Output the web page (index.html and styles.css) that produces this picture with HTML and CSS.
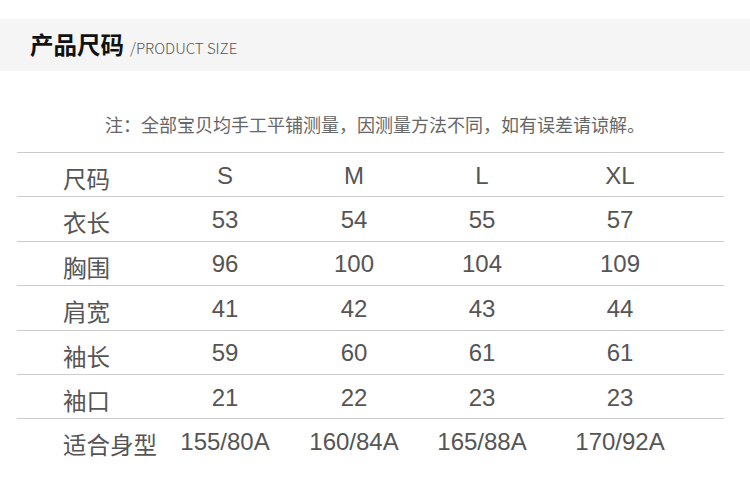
FILE: index.html
```html
<!DOCTYPE html>
<html lang="zh-CN">
<head>
<meta charset="utf-8">
<title>产品尺码</title>
<link rel="stylesheet" href="styles.css">
</head>
<body>
<div class="header">
  <h1 class="title">产品尺码</h1>
  <span class="subtitle">/PRODUCT SIZE</span>
</div>
<p class="note">注：全部宝贝均手工平铺测量，因测量方法不同，如有误差请谅解。</p>
<div class="table">
  <div class="row"><span class="label">尺码</span><span class="cell">S</span><span class="cell">M</span><span class="cell">L</span><span class="cell">XL</span></div>
  <div class="row"><span class="label">衣长</span><span class="cell">53</span><span class="cell">54</span><span class="cell">55</span><span class="cell">57</span></div>
  <div class="row"><span class="label">胸围</span><span class="cell">96</span><span class="cell">100</span><span class="cell">104</span><span class="cell">109</span></div>
  <div class="row"><span class="label">肩宽</span><span class="cell">41</span><span class="cell">42</span><span class="cell">43</span><span class="cell">44</span></div>
  <div class="row"><span class="label">袖长</span><span class="cell">59</span><span class="cell">60</span><span class="cell">61</span><span class="cell">61</span></div>
  <div class="row"><span class="label">袖口</span><span class="cell">21</span><span class="cell">22</span><span class="cell">23</span><span class="cell">23</span></div>
  <div class="row"><span class="label">适合身型</span><span class="cell">155/80A</span><span class="cell">160/84A</span><span class="cell">165/88A</span><span class="cell">170/92A</span></div>
</div>
</body>
</html>
```
FILE: styles.css
```css
html, body {
  margin: 0;
  padding: 0;
  background: #fff;
}
body {
  width: 750px;
  height: 486px;
  overflow: hidden;
  font-family: "Noto Sans CJK SC", "Liberation Sans", sans-serif;
}
.header {
  margin-top: 19px;
  height: 52px;
  background: #f5f5f5;
  display: flex;
  align-items: center;
  padding-left: 30px;
  gap: 6px;
}
.title {
  margin: 0;
  font-size: 23.5px;
  font-weight: 700;
  color: #111;
  line-height: 1;
}
.subtitle {
  font-family: "Noto Sans CJK SC", sans-serif;
  font-size: 15px;
  font-weight: 300;
  color: #555;
  margin-top: 4px;
  line-height: 1;
}
.note {
  margin: 41px 0 0;
  height: 24px;
  line-height: 24px;
  text-align: center;
  font-size: 18px;
  color: #666;
}
.table {
  margin: 16px 0 0 17px;
  width: 707px;
}
.row {
  display: grid;
  grid-template-columns: 143px 130px 128px 128px 148px 1fr;
  align-items: center;
  height: 44.4px;
  box-sizing: border-box;
  border-top: 1px solid #ccc;
  color: #555;
}
.label {
  padding-left: 46px;
  font-family: "Noto Sans CJK SC", sans-serif;
  font-size: 23.5px;
  line-height: 1;
  white-space: nowrap;
  position: relative;
  top: 4px;
}
.cell {
  text-align: center;
  font-family: "Liberation Sans", Arial, sans-serif;
  font-size: 24px;
  line-height: 1;
  white-space: nowrap;
  position: relative;
  top: 1px;
}
```
